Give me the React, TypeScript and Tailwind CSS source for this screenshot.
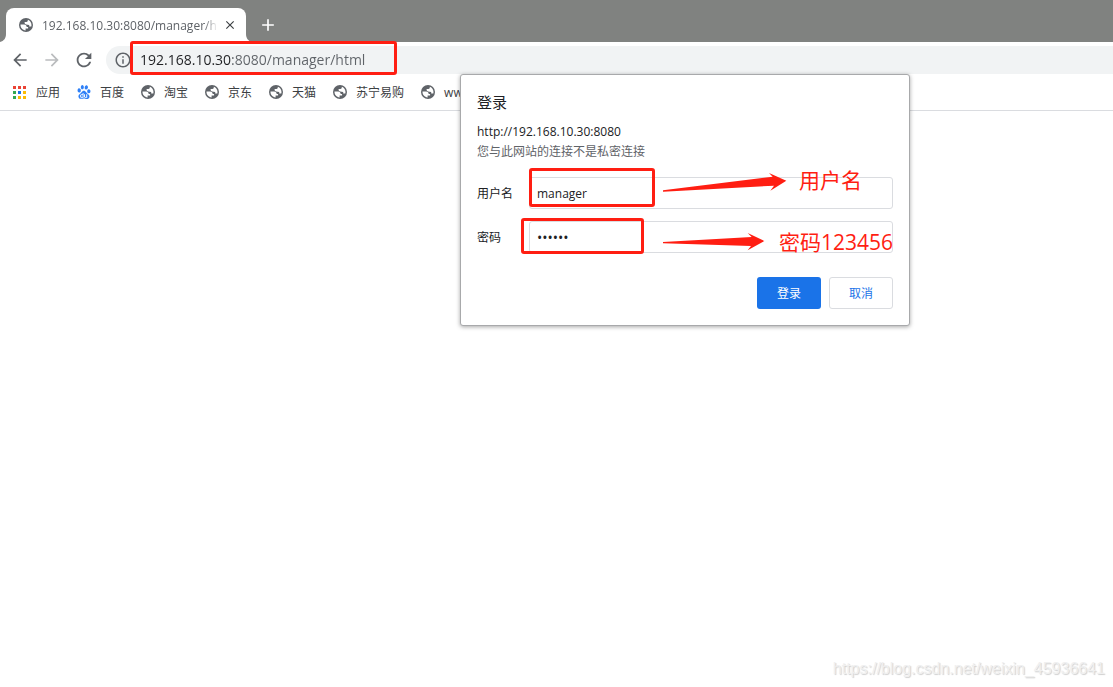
import { MdArrowBack, MdArrowForward, MdRefresh, MdInfoOutline, MdClose, MdAdd } from "react-icons/md";
import { SiBaidu } from "react-icons/si";

const bookmarks = [
  { label: "百度", icon: "baidu" },
  { label: "淘宝", icon: "globe" },
  { label: "京东", icon: "globe" },
  { label: "天猫", icon: "globe" },
  { label: "苏宁易购", icon: "globe" },
  { label: "www", icon: "globe" },
];

const appSquares = [
  "#ea4335", "#ea4335", "#ea4335",
  "#34a853", "#1a73e8", "#fbbc04",
  "#34a853", "#fbbc04", "#fbbc04",
];

function AppsIcon() {
  return (
    <svg viewBox="0 0 16 16" className="size-4 shrink-0" shapeRendering="crispEdges">
      {appSquares.map((color, i) => (
        <rect key={i} x={1 + (i % 3) * 5} y={2 + Math.floor(i / 3) * 5} width="3" height="3" fill={color} />
      ))}
    </svg>
  );
}

function GlobeIcon() {
  return (
    <svg viewBox="0 0 16 16" className="size-4 shrink-0">
      <circle cx="8" cy="8" r="7" fill="#5f6368" />
      <path d="M2.5 7.6H6.3Q8.6 7.8 8.8 10.1H10.1V11.6H7.6V13.4C4.6 13.2 2.3 10.8 2.5 7.6Z" fill="#fff" />
      <path d="M9.8 2.7C12 3.4 13.5 5.5 13.5 8C13.5 8.6 13.4 9 13.3 9.4H11.2V7.9L9.5 7.7C7.6 7.5 6.6 6.9 6.6 5.7V4.9H8.5Q9.8 4.8 9.8 3.6Z" fill="#fff" />
    </svg>
  );
}

function TabStrip() {
  return (
    <header className="flex h-[42px] items-end bg-[#808280]">
      <svg viewBox="0 0 6 8" className="h-2 w-1.5 shrink-0">
        <path d="M6 0V8H0C4 7 6 4 6 0Z" fill="#fff" />
      </svg>
      <div className="flex h-[34px] w-60 items-center rounded-t-lg bg-white pl-3 pr-2">
        <GlobeIcon />
        <span className="ml-2 flex-1 overflow-hidden whitespace-nowrap pt-0.5 text-xs text-[#5f6368] [mask-image:linear-gradient(to_right,black_92%,transparent)]">
          192.168.10.30:8080/manager/h
        </span>
        <button aria-label="关闭标签页" className="ml-1 flex size-4 items-center justify-center text-[#3c4043]">
          <MdClose className="size-3.5" />
        </button>
      </div>
      <svg viewBox="0 0 6 8" className="h-2 w-1.5 shrink-0">
        <path d="M0 0V8H6C2 7 0 4 0 0Z" fill="#fff" />
      </svg>
      <button aria-label="打开新的标签页" className="flex h-[34px] w-8 items-center justify-center text-white">
        <MdAdd className="size-5" />
      </button>
    </header>
  );
}

function Toolbar() {
  return (
    <div className="flex h-8 items-end bg-white pl-1">
      <button aria-label="后退" className="flex h-7 w-8 items-center justify-center text-[#5f6368]">
        <MdArrowBack className="size-5" />
      </button>
      <button aria-label="前进" className="flex h-7 w-8 items-center justify-center text-[#babcbe]">
        <MdArrowForward className="size-5" />
      </button>
      <button aria-label="重新加载" className="flex h-7 w-8 items-center justify-center text-[#5f6368]">
        <MdRefresh className="size-[22px]" />
      </button>
      <div className="ml-1.5 flex h-7 flex-1 items-center rounded-l-full bg-[#f1f3f4] pl-2">
        <MdInfoOutline className="size-[18px] shrink-0 text-[#5f6368]" />
        <div className="relative flex h-7 flex-1 items-center pl-2">
          <input
            aria-label="地址和搜索栏"
            defaultValue="192.168.10.30:8080/manager/html"
            className="w-full bg-[linear-gradient(to_right,#202124_92px,#5f6368_92px)] bg-clip-text text-sm text-transparent outline-none"
          />
          <div className="pointer-events-none absolute -left-0.5 -top-[5px] h-[34px] w-[267px] rounded-[3px] border-3 border-[#ff1e12]" />
        </div>
      </div>
    </div>
  );
}

function BookmarksBar() {
  return (
    <nav className="flex h-[37px] items-center gap-4 border-b border-[#dadce0] bg-white px-3 text-xs text-[#3c4043]">
      <a href="#apps" className="flex items-center gap-2">
        <AppsIcon />
        <span className="pt-0.5">应用</span>
      </a>
      {bookmarks.map((item) => (
        <a key={item.label} href="#bookmark" className="flex items-center gap-2 whitespace-nowrap">
          {item.icon === "baidu" ? (
            <span className="flex size-4 items-center justify-center">
              <SiBaidu className="size-3.5 text-[#2f80f7]" />
            </span>
          ) : (
            <GlobeIcon />
          )}
          <span className="pt-0.5">{item.label}</span>
        </a>
      ))}
    </nav>
  );
}

function LoginDialog() {
  return (
    <form
      role="dialog"
      aria-labelledby="login-title"
      onSubmit={(e) => e.preventDefault()}
      className="absolute left-[460px] top-[74px] w-[450px] rounded-[3px] border border-[#a8a9ab] bg-white px-4 pb-4 pt-[15px] text-xs text-[#202124] shadow-[0_1px_4px_rgba(0,0,0,0.35)]"
    >
      <h1 id="login-title" className="text-[15px] leading-6">登录</h1>
      <p className="mt-2 leading-5">http://192.168.10.30:8080</p>
      <p className="leading-5 text-[#5f6368]">您与此网站的连接不是私密连接</p>

      <div className="mt-[15px] flex items-center">
        <label htmlFor="username" className="w-13 pt-0.5">用户名</label>
        <div className="relative flex-1">
          <input
            id="username"
            type="text"
            defaultValue="manager"
            className="block h-8 w-full rounded-[3px] border border-[#dadce0] px-[7px] outline-none"
          />
          <div className="pointer-events-none absolute left-0 -top-[9px] h-[39px] w-[126px] rounded-[3px] border-3 border-[#ff1e12]" />
          <svg viewBox="66 36 378 60" className="pointer-events-none absolute left-[133px] -top-[5px] h-5 w-[126px]">
            <path d="M69 91L398 50L387 39L439 62L391 92L402 77L69 95Z" fill="#ff1e12" />
          </svg>
          <span className="pointer-events-none absolute left-[270px] -top-[11px] text-[21px] leading-7 text-[#ff1e12]">用户名</span>
        </div>
      </div>

      <div className="mt-3 flex items-center">
        <label htmlFor="password" className="w-13 pt-0.5">密码</label>
        <div className="relative flex-1">
          <input
            id="password"
            type="password"
            defaultValue="123456"
            className="block h-8 w-full rounded-[3px] border border-[#dadce0] px-[7px] text-sm outline-none"
          />
          <div className="pointer-events-none absolute -left-2 -top-[3px] h-9 w-[123px] rounded-[3px] border-3 border-[#ff1e12]" />
          <svg viewBox="66 216 309 57" className="pointer-events-none absolute left-[133px] top-[11px] h-[19px] w-[103px]">
            <path d="M69 246L335 231L323 219L373 243L323 271L333 258L69 250Z" fill="#ff1e12" />
          </svg>
          <span className="pointer-events-none absolute left-[250px] top-[7px] whitespace-nowrap text-[21px] leading-7 text-[#ff1e12]">密码123456</span>
        </div>
      </div>

      <div className="mt-6 flex justify-end gap-2">
        <button type="submit" className="h-8 w-16 rounded-[3px] bg-[#1a73e8] pt-0.5 text-white">登录</button>
        <button type="button" className="h-8 w-16 rounded-[3px] border border-[#dadce0] pt-0.5 text-[#1a73e8]">取消</button>
      </div>
    </form>
  );
}

export default function App() {
  return (
    <div className="relative flex min-h-screen flex-col bg-white font-['Open_Sans','Noto_Sans_CJK_SC',sans-serif]">
      <TabStrip />
      <Toolbar />
      <BookmarksBar />
      <main className="flex flex-1 items-end justify-end px-2 pb-1.5">
        <p className="font-['Liberation_Sans',sans-serif] text-base text-[#f0f0f0] [text-shadow:1px_1px_1px_#cfcfcf]">
          https://blog.csdn.net/weixin_45936641
        </p>
      </main>
      <LoginDialog />
    </div>
  );
}
